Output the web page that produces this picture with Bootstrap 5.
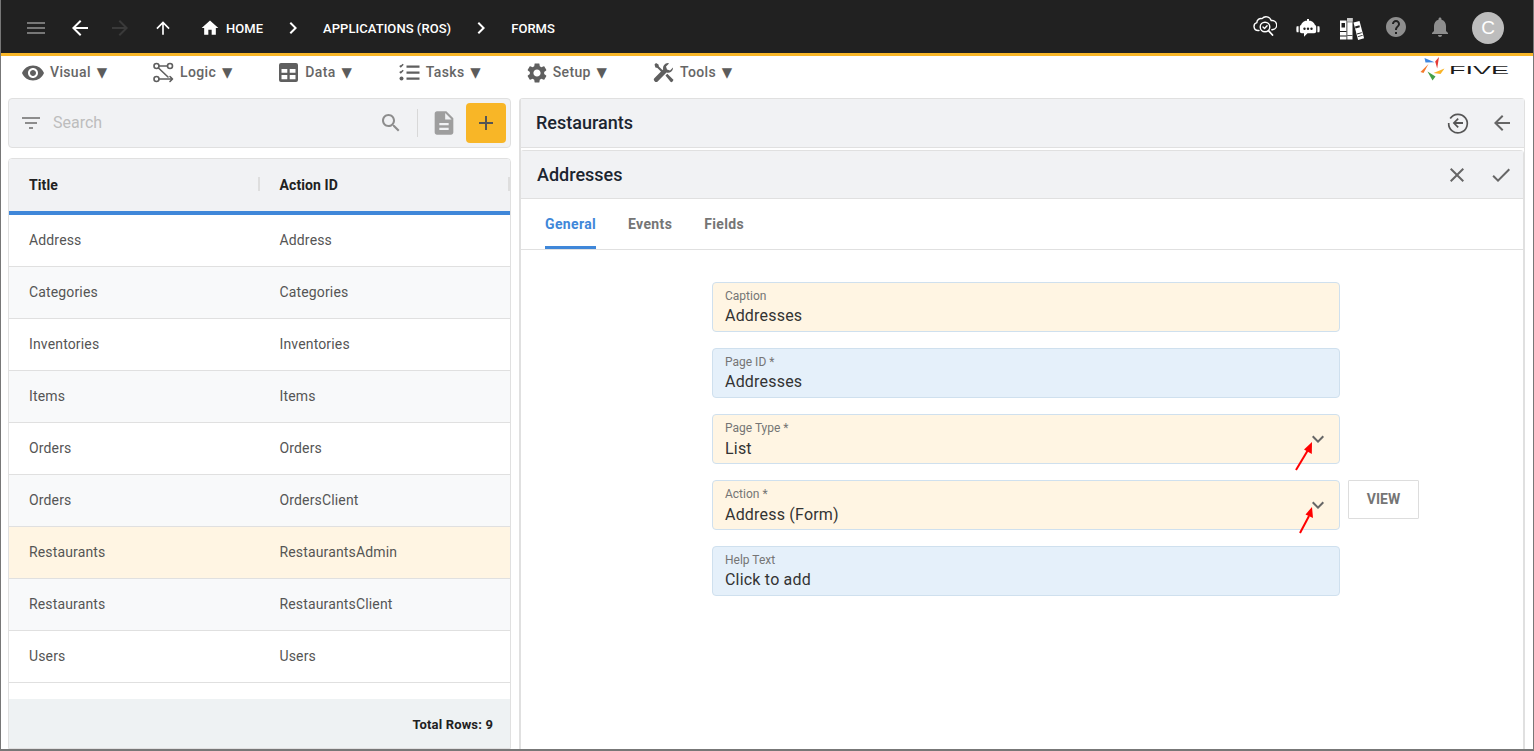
<!DOCTYPE html>
<html lang="en">
<head>
<meta charset="utf-8">
<title>Forms</title>
<link href="https://cdn.jsdelivr.net/npm/bootstrap@5.3.0/dist/css/bootstrap.min.css" rel="stylesheet">
<style>
html,body{height:100%;margin:0;overflow:hidden;background:#fff;font-family:Roboto,"Liberation Sans",sans-serif}
.app-frame{height:751px;border-left:1px solid #777;border-right:1px solid #777;border-bottom:2px solid #777;overflow:hidden}
.top-strip{height:56px;flex:none;background:#212121;border-bottom:3px solid #f8b627;color:#fff;padding-right:29px;padding-top:3px}
.ico{display:block;fill:currentColor;flex:none}
.ib{width:24px;height:24px;flex:none}
.crumb{font-size:13px;font-weight:500;color:#fff;white-space:nowrap;letter-spacing:.05px;padding-top:2px}
.menu-strip{height:42px;flex:none;padding-left:20px;gap:46px}
.menu-item{color:#666;font-size:14px;font-weight:500;letter-spacing:.35px;gap:6px;white-space:nowrap;padding-bottom:9px}
.menu-item .ico{color:#5f5f5f}
.caret-glyph{font-family:"DejaVu Sans",sans-serif;font-size:13.5px;letter-spacing:0;color:#5c5c5c;margin-left:2px}
.gap-eye{gap:5px}
.gap-gear{gap:4px;margin-left:-2px}
.nudge-tasks{margin-left:1px}
.brand-logo{margin-left:auto;margin-right:23px;align-self:flex-start;margin-top:1px}
.left-col{width:503px;margin-left:7px;flex:none}
.right-col{width:1006px;margin-left:8px;flex:none;border:1px solid #e0e0e0;border-bottom:0;border-radius:4px 4px 0 0;border-left-width:2px}
.search-card{height:50px;flex:none;background:#f1f2f4;border:1px solid #e0e0e0;border-radius:4px;margin-bottom:10px;color:#8d8d8d}
.search-card input{background:transparent;border:0;box-shadow:none;padding:0;font-size:16px;color:#777}
.search-card input::placeholder{color:#bdbdbd}
.add-tile{width:40px;height:40px;background:#f8b627;border:0;border-radius:4px;color:#555;padding:0;margin:0 4px 0 0}
.vsep{width:1px;height:28px;background:#d8d8d8}
.grid-card{border:1px solid #e0e0e0;border-radius:4px 4px 0 0;flex:1 1 auto;min-height:0;overflow:hidden}
.grid-head{height:56px;flex:none;background:#f1f2f4;border-bottom:4px solid #3f87d9;font-size:14px;font-weight:700;color:#212121;letter-spacing:.1px}
.grid-head>div{width:250.5px;padding-left:20px;position:relative}
.grid-head>div::after{content:"";position:absolute;right:0;top:2px;height:14px;width:2px;background:#dedede}
.grid-row{height:52px;flex:none;border-bottom:1px solid #e0e0e0;font-size:14px;color:#555;letter-spacing:.15px}
.grid-row>div{width:250.5px;padding-left:20px}
.row-alt{background:#f8f9fa}
.row-sel{background:#fff5e3}
.grid-foot{height:52px;flex:none;margin-top:16px;background:#eef2f3;font-size:13px;font-weight:700;color:#212121;padding-right:17px;letter-spacing:.15px}
.bar-title{background:#f1f2f4;font-size:18px;font-weight:500;color:#1c2530;padding-left:15px;padding-right:10px;gap:20px}
.bar-title .ico{color:#666}
.bar-title .spacer{flex:1 1 auto}
.outer-head{height:49px;border-bottom:1px solid #e0e0e0;padding-bottom:1px}
.inner-panel{border:1px solid #e0e0e0;border-bottom:0;margin-top:2px;border-radius:4px 4px 0 0;height:600px;margin-left:-1px}
.inner-head{height:47px;padding-left:16px}
.tab-strip{height:52px;border-top:1px solid #e0e0e0;border-bottom:1px solid #e0e0e0;padding-left:24px;gap:32px}
.tab-link{font-size:14px;font-weight:700;color:#757575;height:50px;line-height:51px;text-decoration:none;letter-spacing:.35px}
.tab-on{color:#3f87d9;border-bottom:3px solid #3f87d9;border-radius:3px 3px 0 0}
.form-stack{width:628px;margin-left:191px;padding-top:32px;gap:16px}
.field-box{height:50px;border:1px solid #cfe0ee;border-radius:4px;padding:6px 12px 0;position:relative;width:628px;flex:none}
.field-box label{display:block;font-size:12px;line-height:14px;color:#757575;margin:0}
.field-box output{display:block;font-size:16px;line-height:20px;margin-top:3px;color:#333;letter-spacing:.2px}
.field-box.is-pick output{margin-top:4px}
.tint-o{background:#fff5e3}
.tint-b{background:#e5f0fa}
.chev{position:absolute;right:9px;top:12px;color:#666}
.red-arrow{position:absolute;overflow:visible}
.view-btn{width:71px;height:39px;border:1px solid #ddd;border-radius:1px;background:#fff;font-size:14px;font-weight:700;color:#757575;margin-left:8px;padding:0;letter-spacing:0}
.avatar-dot{width:32px;height:32px;border-radius:50%;background:#bdbdbd;color:#fff;font-size:19px;font-family:"Liberation Sans",sans-serif}
</style>
</head>
<body>
<div class="app-frame d-flex flex-column">
  <header class="top-strip d-flex align-items-center">
    <svg class="ico ib" style="margin-left:23px;color:#777" viewBox="0 0 24 24"><path d="M3 18h18v-2H3v2zm0-5h18v-2H3v2zm0-7v2h18V6H3z"/></svg>
    <svg class="ico ib" style="margin-left:20px" viewBox="0 0 24 24"><path d="M20 11H7.830l5.590-5.590L12 4l-8 8 8 8 1.410-1.410L7.830 13H20v-2z"/></svg>
    <svg class="ico ib" style="margin-left:16px;color:#3a3a3a" viewBox="0 0 24 24"><path d="M12 4l-1.410 1.410L16.170 11H4v2h12.170l-5.580 5.590L12 20l8-8z"/></svg>
    <svg class="ico" style="margin-left:21px" width="20" height="20" viewBox="0 0 24 24"><path d="M4 12l1.410 1.410L11 7.830V20h2V7.830l5.580 5.590L20 12l-8-8-8 8z"/></svg>
    <svg class="ico" style="margin-left:27px" width="20" height="20" viewBox="0 0 24 24"><path d="M10 20v-6h4v6h5v-8h3L12 3 2 12h3v8z"/></svg>
    <span class="crumb" style="margin-left:6px">HOME</span>
    <svg class="ico ib" style="margin-left:18px" viewBox="0 0 24 24"><path d="M10 6L8.590 7.410 13.170 12l-4.580 4.590L10 18l6-6z"/></svg>
    <span class="crumb" style="margin-left:18px">APPLICATIONS (ROS)</span>
    <svg class="ico ib" style="margin-left:18px" viewBox="0 0 24 24"><path d="M10 6L8.590 7.410 13.170 12l-4.580 4.590L10 18l6-6z"/></svg>
    <span class="crumb" style="margin-left:18px">FORMS</span>
    <div class="ms-auto d-flex align-items-center">
      <svg class="ico" style="margin-top:-6px" width="24" height="24" viewBox="0 0 24 24" fill="none"><g fill="none" stroke="#fff" stroke-width="1.400" stroke-linecap="round" stroke-linejoin="round"><path d="M6 17.500H5A4 4 0 0 1 3.800 9.700 4.200 4.200 0 0 1 9 5.600 5.400 5.400 0 0 1 18.200 7.600 4.400 4.400 0 0 1 20 16.500c-.4.200-.8.300-1.200.300"/><circle cx="12" cy="14" r="4.800"/><path d="M15.500 17.700l4 4.300" stroke-width="1.800"/><path d="M10 14.100l1.500 1.500 2.600-2.800"/></g></svg>
      <svg class="ico" style="margin-left:19px" width="24" height="24" viewBox="0 0 24 24"><path fill="#fff" d="M11 3h2v1.800h-2zM12 4.400c3.600 0 6.200 2 7 4.600.8.300 1.200 1 1.200 1.800v4.400c0 1.200-.8 2-2 2H11.500L8 20.800V17.200H5.800c-1.200 0-2-.8-2-2v-4.400c0-.8.400-1.500 1.200-1.800.8-2.600 3.400-4.600 7-4.600zM.7 10.200h1.900v6H.7c-.5-1-.5-5 0-6zM21.400 10.200h1.900c.5 1 .5 5 0 6h-1.900z"/><circle cx="8.500" cy="12.800" r="1.200" fill="#212121"/><circle cx="12" cy="12.800" r="1.200" fill="#212121"/><circle cx="15.500" cy="12.800" r="1.200" fill="#212121"/></svg>
      <svg class="ico" style="margin-left:19px;margin-top:3px" width="26" height="26" viewBox="0 0 26 26"><path fill="#fff" d="M1 3.500h6.500v19H1zM8.300 1h5.200v21.500H8.300z"/><path fill="#212121" d="M2.500 6h3.500v4.500H2.500zM1 14h6.500v.9H1zM1 18.500h6.500v.9H1zM8.300 4.500h5.200v.8H8.300zM8.300 18h5.200v.8H8.300z"/><path fill="#c9c9c9" d="M8.300 1h5.200v3.500H8.300z"/><path fill="#fff" d="M14.500 5.500l6-1.500 4.600 17.200-6 1.700z"/><path fill="#212121" d="M16 9.500l4.400-1.200.5 1.900-4.400 1.200zM18 16.600l4.700-1.300.2.800-4.700 1.300zM18.800 19.200l4.700-1.300.2.800-4.700 1.300z"/></svg>
      <svg class="ico" style="margin-left:19px;margin-top:-3px;color:#8e8e8e" width="24" height="24" viewBox="0 0 24 24"><path d="M12 2C6.480 2 2 6.480 2 12s4.480 10 10 10 10-4.480 10-10S17.520 2 12 2zm1 17h-2v-2h2v2zm2.070-7.750l-.9.920C13.450 12.900 13 13.500 13 15h-2v-.5c0-1.100.45-2.100 1.170-2.830l1.240-1.260c.37-.36.59-.86.59-1.410 0-1.100-.9-2-2-2s-2 .9-2 2H8c0-2.210 1.790-4 4-4s4 1.790 4 4c0 .88-.36 1.680-.93 2.250z"/></svg>
      <svg class="ico" style="margin-left:20px;margin-top:-3px;color:#8e8e8e" width="24" height="24" viewBox="0 0 24 24"><path d="M12 22c1.100 0 2-.9 2-2h-4c0 1.100.89 2 2 2zm6-6v-5c0-3.070-1.640-5.640-4.500-6.320V4c0-.83-.67-1.500-1.500-1.500s-1.500.67-1.500 1.500v.68C7.630 5.360 6 7.920 6 11v5l-2 2v1h16v-1l-2-2z"/></svg>
      <div class="avatar-dot d-flex align-items-center justify-content-center" style="margin-left:20px">C</div>
    </div>
  </header>

  <nav class="menu-strip d-flex align-items-center">
    <div class="menu-item gap-eye d-flex align-items-center"><svg class="ico ib" viewBox="0 0 24 24"><path d="M12 4.500C7 4.500 2.730 7.610 1 12c1.730 4.390 6 7.500 11 7.500s9.270-3.110 11-7.500c-1.730-4.390-6-7.500-11-7.500zM12 17c-2.760 0-5-2.240-5-5s2.240-5 5-5 5 2.240 5 5-2.240 5-5 5zm0-8c-1.660 0-3 1.340-3 3s1.340 3 3 3 3-1.340 3-3-1.340-3-3-3z"/></svg><span>Visual <span class="caret-glyph">▼</span></span></div>
    <div class="menu-item d-flex align-items-center"><svg class="ico" width="21" height="21" viewBox="0 0 21 21" fill="none"><g fill="none" stroke="#5f5f5f" stroke-width="1.600" stroke-linecap="round" stroke-linejoin="round"><circle cx="3.500" cy="4" r="2.500"/><circle cx="17" cy="4" r="2.500"/><circle cx="3.500" cy="17" r="2.500"/><path d="M6 4h8.500M5.500 6l9.500 9M6 17h13M17 14.500l2.500 2.500-2.500 2.500"/></g></svg><span>Logic <span class="caret-glyph">▼</span></span></div>
    <div class="menu-item d-flex align-items-center"><svg class="ico" width="21" height="21" viewBox="0 0 21 21"><path fill-rule="evenodd" d="M3 1h15a2 2 0 0 1 2 2v15a2 2 0 0 1-2 2H3a2 2 0 0 1-2-2V3a2 2 0 0 1 2-2zM3.500 7v3.800h5.800V7zm8.200 0v3.800h5.800V7zM3.500 13v4.200h5.800V13zm8.200 0v4.200h5.800V13z"/></svg><span>Data <span class="caret-glyph">▼</span></span></div>
    <div class="menu-item nudge-tasks d-flex align-items-center"><svg class="ico" width="21" height="21" viewBox="0 0 21 21"><path d="M7.500 3.500h13v2.200h-13zM7.500 9.500h13v2.200h-13zM7.500 15.500h13v2.200h-13z"/><path d="M.8 3.600l1 1 2.400-2.400" fill="none" stroke="#5f5f5f" stroke-width="1.500"/><path d="M.8 9.600l1 1 2.400-2.400" fill="none" stroke="#5f5f5f" stroke-width="1.500"/><circle cx="2.500" cy="16.500" r="2"/></svg><span>Tasks <span class="caret-glyph">▼</span></span></div>
    <div class="menu-item gap-gear d-flex align-items-center"><svg class="ico ib" viewBox="0 0 24 24"><path d="M19.140 12.940c.04-.3.06-.61.06-.94 0-.32-.02-.64-.07-.94l2.030-1.580c.18-.14.23-.41.12-.61l-1.920-3.320c-.12-.22-.37-.29-.59-.22l-2.390.96c-.5-.38-1.030-.7-1.620-.94l-.36-2.540c-.04-.24-.24-.41-.48-.41h-3.840c-.24 0-.43.17-.47.41l-.36 2.540c-.59.24-1.130.57-1.620.94l-2.390-.96c-.22-.08-.47 0-.59.22L2.740 8.870c-.12.21-.08.47.12.61l2.030 1.580c-.05.3-.09.63-.09.94s.02.64.07.94l-2.030 1.580c-.18.14-.23.41-.12.61l1.920 3.320c.12.22.37.29.59.22l2.390-.96c.5.38 1.030.7 1.620.94l.36 2.540c.05.24.24.41.48.41h3.840c.24 0 .44-.17.47-.41l.36-2.540c.59-.24 1.130-.56 1.620-.94l2.390.96c.22.08.47 0 .59-.22l1.920-3.320c.12-.22.07-.47-.12-.61l-2.010-1.580zM12 15.600c-1.980 0-3.600-1.620-3.600-3.600s1.620-3.600 3.600-3.600 3.600 1.620 3.600 3.600-1.620 3.600-3.600 3.600z"/></svg><span>Setup <span class="caret-glyph">▼</span></span></div>
    <div class="menu-item d-flex align-items-center"><svg class="ico" width="21" height="21" viewBox="0 0 21 21"><path d="M1.500 2.500L3 1l2.500 1.500.4 2 6 6-1.500 1.500-6-6-2-.4z"/><path d="M15 1a5 5 0 0 0-4.800 6.300L1.600 15.900a2.300 2.300 0 0 0 0 3.300 2.300 2.300 0 0 0 3.300 0l8.600-8.600A5 5 0 0 0 20 5.500l-3 3-3-1-1-3 3-3a5 5 0 0 0-1-.5z"/><path d="M12.500 13.500l1.800-1.800 5.600 5.600a1.300 1.300 0 0 1 0 1.800l-.6.600a1.300 1.300 0 0 1-1.800 0z"/></svg><span>Tools <span class="caret-glyph">▼</span></span></div>
    <svg class="brand-logo" width="90" height="26" viewBox="0 0 90 26" role="img" aria-label="FIVE logo"><path fill="#3f87e0" d="M4.500 1l10 4.200-9 .2z"/><path fill="#e53935" d="M19 0l-3.800 4.500 2 7z"/><path fill="#f9b428" d="M24.500 11.500l-11 4.500 7 1z"/><path fill="#43a047" d="M7.500 14.500l8 5-3 4z"/><path fill="#f4792b" d="M8.500 7L.5 15l3 1z"/><text x="29" y="16.500" font-family="Liberation Sans, sans-serif" font-size="11.500" fill="#1b1b1b" textLength="60" lengthAdjust="spacingAndGlyphs">FIVE</text></svg>
  </nav>

  <main class="d-flex flex-grow-1" style="min-height:0">
    <section class="left-col d-flex flex-column">
      <div class="search-card d-flex align-items-center">
        <svg class="ico ib" style="margin-left:10px;color:#8d8d8d" viewBox="0 0 24 24"><path d="M10 18h4v-2h-4v2zM3 6v2h18V6H3zm3 7h12v-2H6v2z"/></svg>
        <input class="form-control flex-grow-1" style="margin-left:10px;width:auto;min-width:0" type="text" placeholder="Search" aria-label="Search">
        <svg class="ico ib" style="margin-right:14px;color:#8d8d8d" viewBox="0 0 24 24"><path d="M15.500 14h-.79l-.28-.27C15.410 12.590 16 11.110 16 9.500 16 5.910 13.090 3 9.500 3S3 5.910 3 9.500 5.910 16 9.500 16c1.610 0 3.090-.59 4.230-1.570l.27.28v.79l5 4.990L20.490 19l-4.990-5zm-6 0C7.010 14 5 11.990 5 9.500S7.010 5 9.500 5 14 7.010 14 9.500 11.990 14 9.500 14z"/></svg>
        <div class="vsep"></div>
        <svg class="ico" style="margin-left:12px;margin-right:8px;color:#9e9e9e" width="28" height="28" viewBox="0 0 24 24"><path d="M14 2H6c-1.100 0-1.990.9-1.990 2L4 20c0 1.100.89 2 1.990 2H18c1.100 0 2-.9 2-2V8l-6-6zm2 16H8v-2h8v2zm0-4H8v-2h8v2zm-3-5V3.500L18.500 9H13z"/></svg>
        <button class="add-tile d-flex align-items-center justify-content-center" type="button" aria-label="Add"><svg class="ico ib" viewBox="0 0 24 24"><path d="M19 13h-6v6h-2v-6H5v-2h6V5h2v6h6v2z"/></svg></button>
      </div>
      <div class="grid-card d-flex flex-column">
        <div class="grid-head d-flex align-items-center"><div>Title</div><div>Action ID</div></div>
        <div class="grid-row d-flex align-items-center"><div>Address</div><div>Address</div></div>
        <div class="grid-row row-alt d-flex align-items-center"><div>Categories</div><div>Categories</div></div>
        <div class="grid-row d-flex align-items-center"><div>Inventories</div><div>Inventories</div></div>
        <div class="grid-row row-alt d-flex align-items-center"><div>Items</div><div>Items</div></div>
        <div class="grid-row d-flex align-items-center"><div>Orders</div><div>Orders</div></div>
        <div class="grid-row row-alt d-flex align-items-center"><div>Orders</div><div>OrdersClient</div></div>
        <div class="grid-row row-sel d-flex align-items-center"><div>Restaurants</div><div>RestaurantsAdmin</div></div>
        <div class="grid-row row-alt d-flex align-items-center"><div>Restaurants</div><div>RestaurantsClient</div></div>
        <div class="grid-row d-flex align-items-center"><div>Users</div><div>Users</div></div>
        <div class="grid-foot d-flex align-items-center justify-content-end">Total Rows: 9</div>
      </div>
    </section>

    <section class="right-col">
      <div class="bar-title outer-head d-flex align-items-center">
        <span>Restaurants</span><span class="spacer"></span>
        <svg class="ico ib" viewBox="0 0 24 24"><path fill="none" stroke="#555" stroke-width="1.700" d="M4.200 7.500A9.300 9.300 0 1 1 2.700 12"/><path d="M17 11.100H10l2.800-2.800-1.200-1.200L6.700 12l4.900 4.900 1.200-1.200L10 12.900h7z" fill="#555"/></svg>
        <svg class="ico ib" viewBox="0 0 24 24"><path d="M20 11H7.830l5.590-5.590L12 4l-8 8 8 8 1.410-1.410L7.830 13H20v-2z"/></svg>
      </div>
      <div class="inner-panel">
        <div class="bar-title inner-head d-flex align-items-center">
          <span>Addresses</span><span class="spacer"></span>
          <svg class="ico ib" viewBox="0 0 24 24"><path d="M19 6.410L17.590 5 12 10.590 6.410 5 5 6.410 10.590 12 5 17.590 6.410 19 12 13.410 17.590 19 19 17.590 13.410 12z"/></svg>
          <svg class="ico ib" viewBox="0 0 24 24"><path d="M9 16.170L4.830 12l-1.420 1.410L9 19 21 7l-1.410-1.410z"/></svg>
        </div>
        <div class="tab-strip d-flex">
          <a class="tab-link tab-on" href="#">General</a>
          <a class="tab-link" href="#">Events</a>
          <a class="tab-link" href="#">Fields</a>
        </div>
        <div class="form-stack d-flex flex-column">
          <div class="field-box tint-o"><label>Caption</label><output>Addresses</output></div>
          <div class="field-box tint-b"><label>Page ID *</label><output>Addresses</output></div>
          <div class="field-box is-pick tint-o"><label>Page Type *</label><output>List</output>
            <svg class="ico ib chev" viewBox="0 0 24 24"><path d="M16.590 8.590L12 13.170 7.410 8.590 6 10l6 6 6-6z"/></svg>
            <svg class="red-arrow" style="left:580px;top:24px" width="24" height="32" viewBox="0 0 24 32"><path d="M3 31L15 11" stroke="#f00" stroke-width="2" fill="none"/><path fill="#f00" d="M19 3L18.800 15 11 10.500z"/></svg>
          </div>
          <div class="d-flex align-items-start" style="width:720px">
            <div class="field-box is-pick tint-o"><label>Action *</label><output>Address (Form)</output>
              <svg class="ico ib chev" viewBox="0 0 24 24"><path d="M16.590 8.590L12 13.170 7.410 8.590 6 10l6 6 6-6z"/></svg>
              <svg class="red-arrow" style="left:585px;top:23px" width="20" height="30" viewBox="0 0 20 30"><path d="M2 29L11 12" stroke="#f00" stroke-width="2" fill="none"/><path fill="#f00" d="M14 3L15 14 7.500 10.500z"/></svg>
            </div>
            <button class="view-btn" type="button">VIEW</button>
          </div>
          <div class="field-box tint-b"><label>Help Text</label><output>Click to add</output></div>
        </div>
      </div>
    </section>
  </main>
</div>
<script src="https://cdn.jsdelivr.net/npm/bootstrap@5.3.0/dist/js/bootstrap.bundle.min.js"></script>
</body>
</html>
